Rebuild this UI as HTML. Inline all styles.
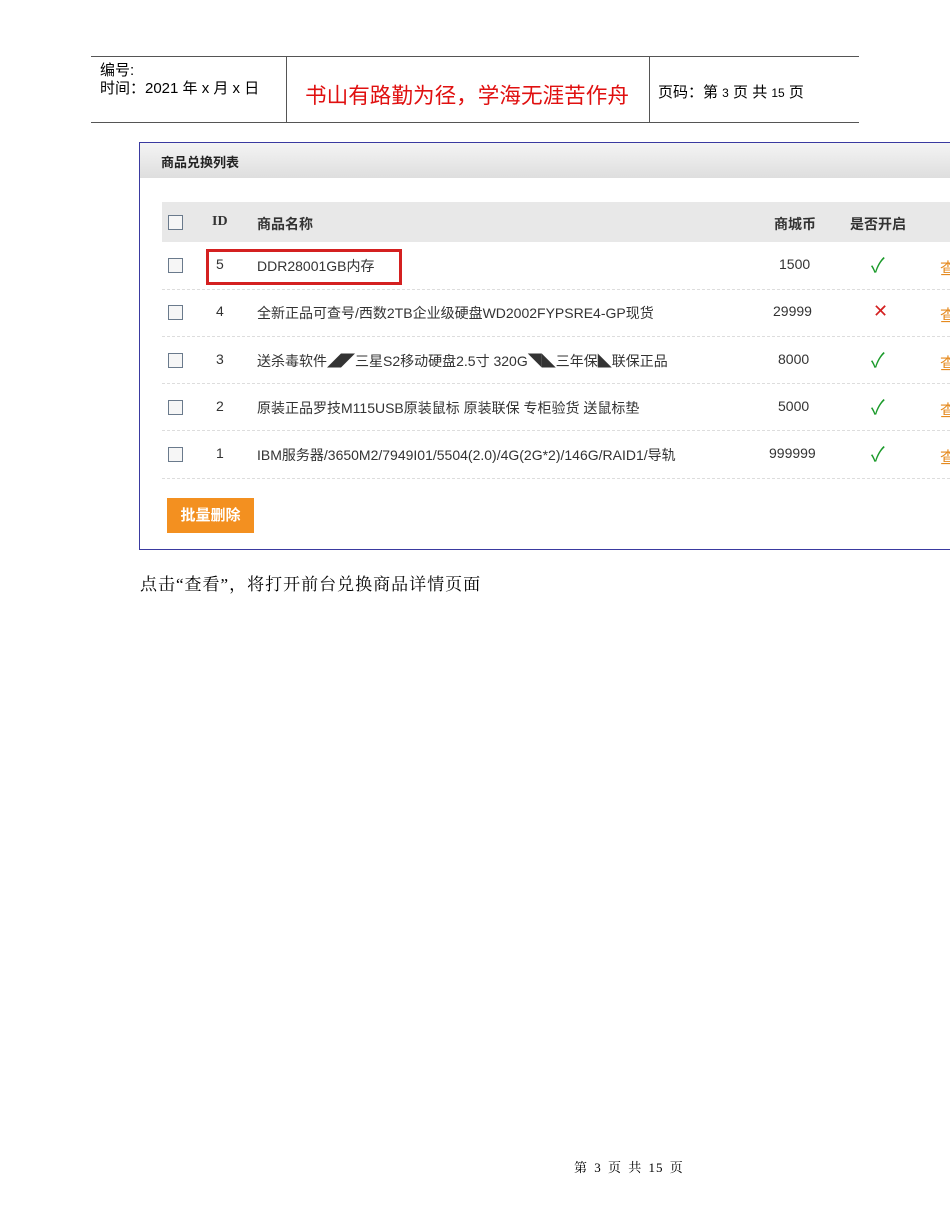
<!DOCTYPE html>
<html><head><meta charset="utf-8"><style>
body{margin:0;width:950px;height:1230px;background:#fff;position:relative;overflow:hidden;font-family:"Liberation Sans","Noto Sans CJK SC",sans-serif;}
.a{position:absolute;white-space:nowrap}
.hl{position:absolute;background:#555;height:1px}
.vl{position:absolute;background:#555;width:1px}
.row{position:absolute;left:162px;width:788px;height:0;border-top:1px dashed #ddd}
.cb{position:absolute;left:168px;width:13px;height:13px;border:1px solid #6a7a8c;background:#f6f6f6}
.t{font-size:14px;color:#333}
.ok{color:#1a9a2a;font-size:20px}
.ck{color:#e58a1f;font-size:16px;left:940px}
</style></head><body>
<div class="hl" style="left:91px;top:56px;width:768px"></div>
<div class="hl" style="left:91px;top:122px;width:768px"></div>
<div class="vl" style="left:286px;top:56px;height:66px"></div>
<div class="vl" style="left:649px;top:56px;height:66px"></div>
<div class="a" style="left:100px;top:59px;font-size:15px">编号:</div>
<div class="a" style="left:100px;top:77px;font-size:15px">时间：2021 年 x 月 x 日</div>
<div class="a" style="left:305px;top:79px;font-size:21.6px;color:#e01010">书山有路勤为径，学海无涯苦作舟</div>
<div class="a" style="left:658px;top:81px;font-size:15px">页码：第 <span style="font-size:12px">3</span> 页  共 <span style="font-size:12px">15</span> 页</div>

<div class="a" style="left:139px;top:142px;width:820px;height:406px;border:1px solid #3a3aa0;background:#fff"></div>
<div class="a" style="left:140px;top:143px;width:810px;height:35px;background:linear-gradient(#f4f4f4,#dedede)"></div>
<div class="a" style="left:161px;top:152px;font-size:13px;font-weight:bold;color:#222">商品兑换列表</div>
<div class="a" style="left:162px;top:202px;width:788px;height:40px;background:#e8e8e8"></div>
<div class="cb" style="top:215px"></div>
<div class="a" style="left:212px;top:214px;font-size:14px;font-weight:bold;font-family:'Liberation Serif',serif;color:#333">ID</div>
<div class="a" style="left:257px;top:214px;font-size:14px;font-weight:bold;color:#333">商品名称</div>
<div class="a" style="left:774px;top:214px;font-size:14px;font-weight:bold;color:#333">商城币</div>
<div class="a" style="left:850px;top:214px;font-size:14px;font-weight:bold;color:#333">是否开启</div>

<div class="row" style="top:289px"></div><div class="row" style="top:336px"></div><div class="row" style="top:383px"></div><div class="row" style="top:430px"></div><div class="row" style="top:478px"></div>

<div class="cb" style="top:258px"></div><div class="a t" style="left:216px;top:256px">5</div><div class="a t" style="left:257px;top:256px">DDR28001GB内存</div><div class="a t" style="left:779px;top:256px">1500</div><div class="a ok" style="left:871px;top:249px">✓</div><div class="a ck" style="top:255px">查</div>
<div class="a" style="left:206px;top:249px;width:190px;height:30px;border:3px solid #d42020"></div>
<div class="cb" style="top:305px"></div><div class="a t" style="left:216px;top:303px">4</div><div class="a t" style="left:257px;top:303px">全新正品可查号/西数2TB企业级硬盘WD2002FYPSRE4-GP现货</div><div class="a t" style="left:773px;top:303px">29999</div><div class="a" style="left:873px;top:301px;color:#d42020;font-size:18px">✕</div><div class="a ck" style="top:302px">查</div>
<div class="cb" style="top:353px"></div><div class="a t" style="left:216px;top:351px">3</div><div class="a t" style="left:257px;top:351px">送杀毒软件◢◤三星S2移动硬盘2.5寸 320G◥◣三年保◣联保正品</div><div class="a t" style="left:778px;top:351px">8000</div><div class="a ok" style="left:871px;top:344px">✓</div><div class="a ck" style="top:350px">查</div>
<div class="cb" style="top:400px"></div><div class="a t" style="left:216px;top:398px">2</div><div class="a t" style="left:257px;top:398px">原装正品罗技M115USB原装鼠标 原装联保 专柜验货 送鼠标垫</div><div class="a t" style="left:778px;top:398px">5000</div><div class="a ok" style="left:871px;top:391px">✓</div><div class="a ck" style="top:397px">查</div>
<div class="cb" style="top:447px"></div><div class="a t" style="left:216px;top:445px">1</div><div class="a t" style="left:257px;top:445px">IBM服务器/3650M2/7949I01/5504(2.0)/4G(2G*2)/146G/RAID1/导轨</div><div class="a t" style="left:769px;top:445px">999999</div><div class="a ok" style="left:871px;top:438px">✓</div><div class="a ck" style="top:444px">查</div>

<div class="a" style="left:167px;top:498px;width:87px;height:35px;background:#f39020;color:#fff;font-size:15px;font-weight:bold;line-height:35px;text-align:center">批量删除</div>

<div class="a" style="left:140px;top:570px;font-size:17px;letter-spacing:1px;font-family:'Liberation Serif','Noto Serif CJK SC',serif">点击“查看”，将打开前台兑换商品详情页面</div>
<div class="a" style="left:574px;top:1157px;font-size:13px;letter-spacing:1px;word-spacing:2px;font-family:'Liberation Serif','Noto Serif CJK SC',serif">第 3 页 共 15 页</div>
</body></html>
